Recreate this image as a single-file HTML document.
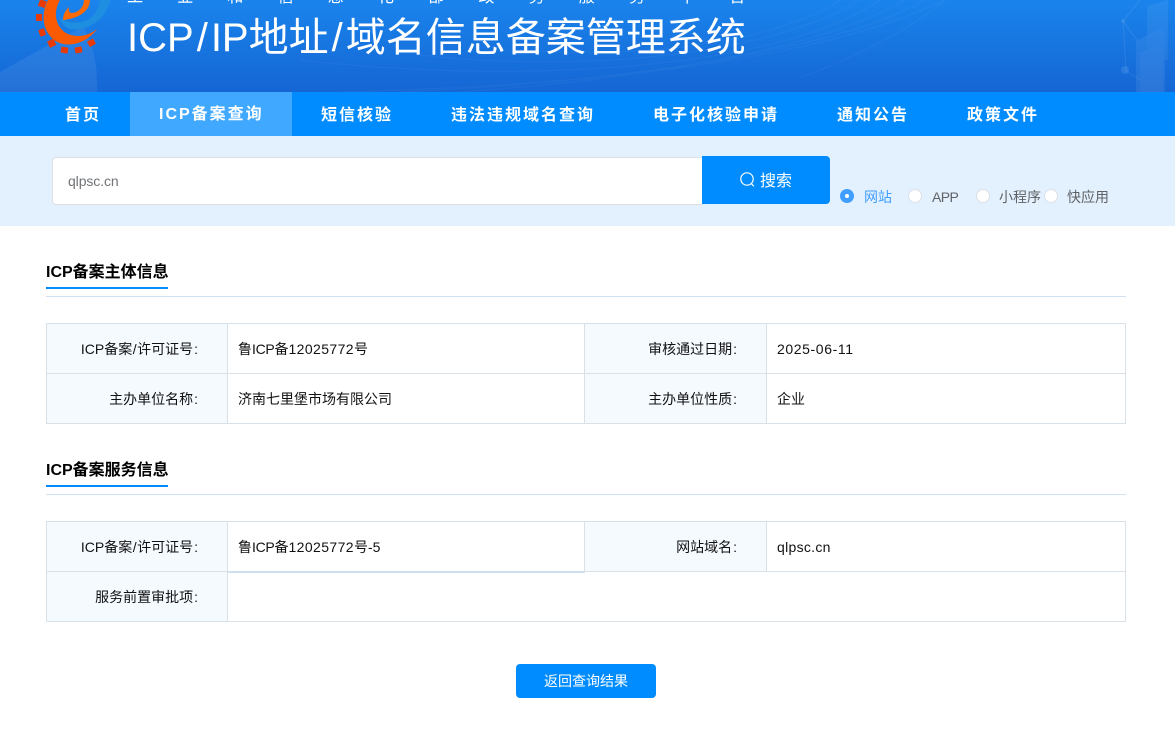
<!DOCTYPE html>
<html lang="zh-CN"><head><meta charset="utf-8"><title>ICP/IP地址/域名信息备案管理系统</title>
<style>
*{box-sizing:border-box;margin:0;padding:0}
html,body{width:1175px;height:731px;overflow:hidden;background:#fff}
body{position:relative;font-family:"Liberation Sans","Noto Sans CJK SC",sans-serif;color:#111}
.a{position:absolute;white-space:nowrap}
.hdr{left:0;top:0;width:1175px;height:92px;background:linear-gradient(180deg,#1a84ec 0%,#1566d4 100%);overflow:hidden}
.nav{left:0;top:92px;width:1175px;height:44px;background:#008cff}
.nav span{position:absolute;top:-1px;line-height:44px;font-size:16px;font-weight:700;color:#fff;letter-spacing:2px;font-family:"Noto Sans CJK SC",sans-serif;white-space:nowrap}
.sb{left:0;top:136px;width:1175px;height:90px;background:#e3f1ff}
.rd{position:absolute;width:14px;height:14px;border-radius:50%;background:#fff;border:1px solid #dcdfe6;top:189px}
.rl{position:absolute;top:187px;font-size:14px;line-height:20px;color:#606266;font-family:"Liberation Sans","Noto Sans CJK SC",sans-serif;white-space:nowrap}
.h{position:absolute;left:46px;font-size:16px;font-weight:700;color:#000;line-height:24px;font-family:"Liberation Sans","Noto Sans CJK SC",sans-serif;white-space:nowrap}
.u{position:absolute;left:46px;width:122px;height:2px;background:#008cff}
.l{position:absolute;left:46px;width:1080px;height:1px;background:#cfe2f3}
.b{position:absolute;background:#f5faff}
.line{position:absolute;background:#d8e0e8}
.t{position:absolute;font-size:14px;line-height:20px;color:#111;white-space:nowrap;font-family:"Liberation Sans","Noto Sans CJK SC",sans-serif}
.t i{font-style:normal;letter-spacing:.4px}
.t u{text-decoration:none;letter-spacing:-.3px}
.t b{font-weight:400;padding-left:1px}
.t s{text-decoration:none;padding:0 .5px}
.s{letter-spacing:3px;padding-left:3px}
</style></head><body>
<div class="a hdr">
<svg width="1175" height="92" style="position:absolute;left:0;top:0" viewBox="0 0 1175 92">
<path d="M0 72C30 55 60 38 83 27C92 42 98 62 97 92H0Z" fill="#fff" opacity=".07"/>
<g fill="none" stroke="#fff" opacity=".035">
<path d="M340 92C600 85 820 60 945 0"/><path d="M400 92C620 82 840 50 925 0"/><path d="M460 92C660 78 830 45 905 0"/><path d="M300 60C520 85 780 70 880 0"/><path d="M420 55C600 75 780 50 860 0"/><path d="M520 50C650 60 780 40 840 0"/><path d="M800 78C860 55 910 30 945 0"/>
</g>
<g fill="#d8ecff" opacity=".11">
<path d="M1147 6L1168 0V60L1147 60Z" opacity=".6"/>
<path d="M1136 41L1161 28L1165 32V92H1136Z" opacity=".7"/>
<path d="M1140 53L1160 44L1163 48V92H1140Z"/>
<circle cx="1125" cy="70" r="4"/><circle cx="1123" cy="21" r="2"/>
</g>
<g stroke="#d8ecff" opacity=".1" fill="none"><path d="M1123 21L1137 40M1123 21L1126 70M1123 21L1140 0M1125 70L1140 80"/></g>
<g fill="#e83a06">
<rect x="39" y="0" width="7" height="7" transform="rotate(20 42 3)"/>
<rect x="36" y="14" width="6" height="7"/>
<rect x="39" y="29" width="6" height="7" transform="rotate(-20 42 32)"/>
<rect x="48" y="40" width="7" height="7" transform="rotate(-25 51 43)"/>
<rect x="61" y="47" width="7" height="6" transform="rotate(10 64 50)"/>
<rect x="75" y="47" width="7" height="6" transform="rotate(-10 78 50)"/>
<rect x="88" y="40" width="7" height="6" transform="rotate(-30 91 43)"/>
</g>
<path d="M48 0C41 14 42 30 54 40C68 50 88 42 97 29C87 37 75 38 66 33C55 26 53 12 60 0Z" fill="#fb5a03"/>
<path d="M90 0C90 8 84 14 76 17C70 19 65 20 63 20C63 14 66 10 69 7C68 13 71 14 76 12C81 10 84 5 84 0Z" fill="#fb6a05"/>
<path d="M110 0C108 12 98 26 80 29C70 31 62 27 60 18C66 23 78 24 87 20C95 16 99 8 100 0Z" fill="#1e8fe0"/>
</svg>
<div class="a" style="left:127px;top:-17px;font-size:16px;line-height:24px;color:#fff;letter-spacing:34.2px;font-family:'Noto Sans CJK SC',sans-serif">工业和信息化部政务服务平台</div>
<div class="a" style="left:127px;top:13px;font-size:40px;line-height:50px;color:#fff;font-family:'Liberation Sans','Noto Sans CJK SC',sans-serif">ICP<span class="s">/</span>IP地址<span class="s">/</span>域名信息备案管理系统</div>
</div>
<div class="a nav">
<div style="position:absolute;left:130px;top:0;width:162px;height:44px;background:#40a9ff"></div>
<span style="left:65px">首页</span><span style="left:159px;top:1px;font-family:'Liberation Sans','Noto Sans CJK SC',sans-serif">ICP备案查询</span><span style="left:321px">短信核验</span><span style="left:451px">违法违规域名查询</span><span style="left:653px">电子化核验申请</span><span style="left:837px">通知公告</span><span style="left:967px">政策文件</span>
</div>
<div class="a sb"></div>
<div class="a" style="left:52px;top:157px;width:651px;height:48px;background:#fff;border:1px solid #dcdfe6;border-radius:4px 0 0 4px"></div>
<div class="a" style="left:68px;top:171px;font-size:14px;line-height:20px;letter-spacing:-.1px;color:#707377">qlpsc.cn</div>
<div class="a" style="left:702px;top:156px;width:128px;height:48px;background:#008cff;border-radius:0 4px 4px 0"></div>
<svg class="a" style="left:739px;top:171px" width="17" height="17" viewBox="0 0 17 17" fill="none" stroke="#fff" stroke-width="1.2"><circle cx="8" cy="8" r="6.2"/><path d="M12.3 12.6L14.6 15" stroke-linecap="round"/></svg>
<div class="a" style="left:760px;top:167px;font-size:16px;line-height:24px;color:#fff;font-family:'Noto Sans CJK SC',sans-serif">搜索</div>
<div class="rd" style="left:840px;background:#409eff;border-color:#409eff"></div>
<div class="a" style="left:845px;top:194px;width:4px;height:4px;border-radius:50%;background:#fff"></div>
<div class="rl" style="left:864px;color:#409eff">网站</div>
<div class="rd" style="left:908px"></div><div class="rl" style="left:932px;letter-spacing:-.6px">APP</div>
<div class="rd" style="left:976px"></div><div class="rl" style="left:999px">小程序</div>
<div class="rd" style="left:1044px"></div><div class="rl" style="left:1067px">快应用</div>

<div class="h" style="top:261px">ICP备案主体信息</div>
<div class="u" style="top:287px"></div><div class="l" style="top:296px"></div>
<div class="b" style="left:46px;top:323px;width:182px;height:101px"></div>
<div class="b" style="left:585px;top:323px;width:182px;height:101px"></div>
<div class="line" style="left:46px;top:323px;width:1080px;height:1px"></div>
<div class="line" style="left:46px;top:373px;width:1080px;height:1px"></div>
<div class="line" style="left:46px;top:423px;width:1080px;height:1px"></div>
<div class="line" style="left:46px;top:323px;width:1px;height:101px"></div>
<div class="line" style="left:227px;top:323px;width:1px;height:101px"></div>
<div class="line" style="left:584px;top:323px;width:1px;height:101px"></div>
<div class="line" style="left:766px;top:323px;width:1px;height:101px"></div>
<div class="line" style="left:1125px;top:323px;width:1px;height:101px"></div>
<div class="t" style="right:977px;top:339px">ICP备案<s>/</s>许可证号<b>:</b></div>
<div class="t" style="left:238px;top:339px">鲁<u>ICP</u>备<i>12025772</i>号</div>
<div class="t" style="right:438px;top:339px">审核通过日期<b>:</b></div>
<div class="t" style="left:777px;top:339px"><i style="letter-spacing:.6px">2025-06-11</i></div>
<div class="t" style="right:977px;top:389px">主办单位名称<b>:</b></div>
<div class="t" style="left:238px;top:389px">济南七里堡市场有限公司</div>
<div class="t" style="right:438px;top:389px">主办单位性质<b>:</b></div>
<div class="t" style="left:777px;top:389px">企业</div>

<div class="h" style="top:459px">ICP备案服务信息</div>
<div class="u" style="top:485px"></div><div class="l" style="top:494px"></div>
<div class="b" style="left:46px;top:521px;width:182px;height:101px"></div>
<div class="b" style="left:585px;top:521px;width:182px;height:50px"></div>
<div class="line" style="left:46px;top:521px;width:1080px;height:1px"></div>
<div class="line" style="left:46px;top:571px;width:1080px;height:1px"></div>
<div class="a" style="left:228px;top:571px;width:357px;height:2px;background:#cfe0f0"></div>
<div class="line" style="left:46px;top:621px;width:1080px;height:1px"></div>
<div class="line" style="left:46px;top:521px;width:1px;height:101px"></div>
<div class="line" style="left:227px;top:521px;width:1px;height:101px"></div>
<div class="line" style="left:584px;top:521px;width:1px;height:51px"></div>
<div class="line" style="left:766px;top:521px;width:1px;height:51px"></div>
<div class="line" style="left:1125px;top:521px;width:1px;height:101px"></div>
<div class="t" style="right:977px;top:537px">ICP备案<s>/</s>许可证号<b>:</b></div>
<div class="t" style="left:238px;top:537px">鲁<u>ICP</u>备<i>12025772</i>号-5</div>
<div class="t" style="right:438px;top:537px">网站域名<b>:</b></div>
<div class="t" style="left:777px;top:537px"><i style="letter-spacing:.3px">qlpsc.cn</i></div>
<div class="t" style="right:977px;top:587px">服务前置审批项<b>:</b></div>

<div class="a" style="left:516px;top:664px;width:140px;height:34px;background:#008cff;border-radius:4px;color:#fff;font-size:14px;line-height:34px;text-align:center;font-family:'Noto Sans CJK SC',sans-serif">返回查询结果</div>
</body></html>
